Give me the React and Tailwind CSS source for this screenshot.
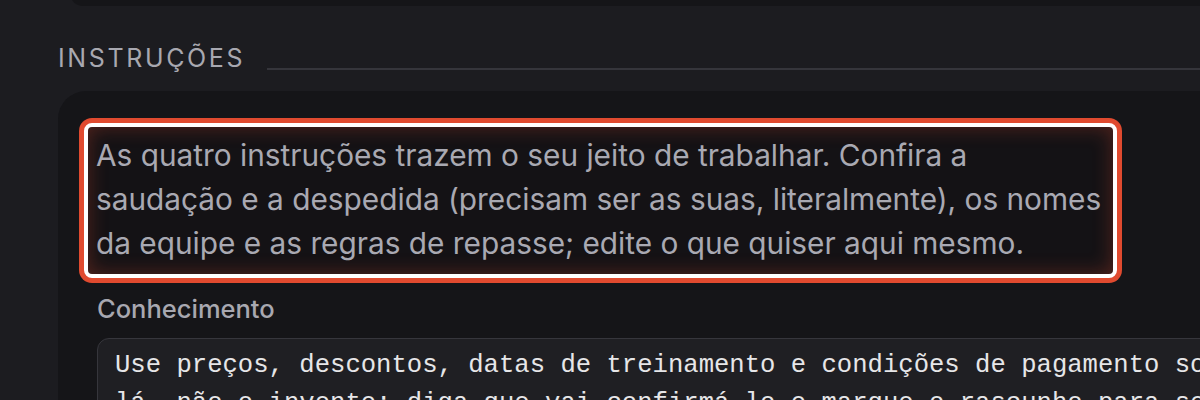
export default function App() {

    return (

        <div
            className="w-[1200px] h-[400px] overflow-hidden bg-[#1c1c20]"
            style={{ fontFamily: "Inter, 'Noto Sans', sans-serif" }}
        >

            {/* Previous card (cut off at the top) */}

            <div className="ml-[70px] mt-[-20px] h-[26px] w-[1200px] rounded-[22px] bg-[#151518]" />

            {/* Section heading */}

            <div className="flex items-end gap-[22px] pl-[58px] mt-[37px]">

                <h2 className="text-[25px] leading-[30px] tracking-[0.105em] text-[#a8a8b0] font-normal">

                    INSTRUÇÕES

                </h2>

                <div className="flex-1 h-[2px] bg-[#35353b] mb-[3px]" />

            </div>

            {/* Instructions card */}

            <div className="ml-[58px] mt-[18px] w-[1300px] rounded-[28px] bg-[#151518] pt-[32px] pl-[26px]">

                <div className="w-[1033px] rounded-[8px] border-[4px] border-white ring-[5px] ring-[#e04a2f] bg-[#141215] shadow-[inset_0_0_20px_rgba(224,74,47,0.32)] pl-[8px] pt-[6px] pb-[9px]">

                    <p className="w-[1012px] text-[29.8px] leading-[44px] text-[#a9a9b2]">

                        As quatro instruções trazem o seu jeito de trabalhar. Confira a<br />
                        saudação e a despedida (precisam ser as suas, literalmente), os nomes<br />
                        da equipe e as regras de repasse; edite o que quiser aqui mesmo.

                    </p>

                </div>

                <div className="pl-[13px] pt-[16px]">

                    <label className="block text-[25.5px] leading-[30px] font-medium text-[#a8a8b0]">

                        Conhecimento

                    </label>

                    <div
                        className="mt-[14px] rounded-[12px] border border-[#36363c] bg-[#1f1f23] pl-[17px] pt-[8px] h-[120px] text-[25.6px] leading-[38px] text-[#e6e6e8] whitespace-pre"
                        style={{ fontFamily: "'Liberation Mono', 'DejaVu Sans Mono', monospace" }}
                    >

                        {"Use preços, descontos, datas de treinamento e condições de pagamento somente da base\nlá, não o invente; diga que vai confirmá-lo e marque o rascunho para ser revisado."}

                    </div>

                </div>

            </div>

        </div>

    );

}
